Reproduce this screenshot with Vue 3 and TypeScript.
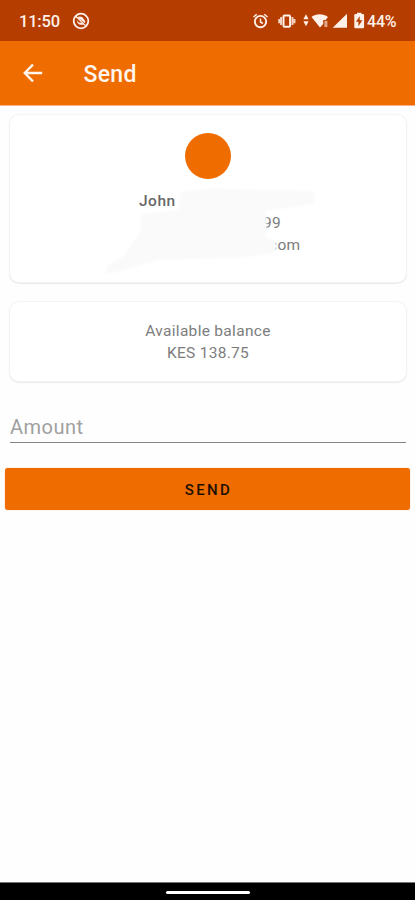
<script setup lang="ts">
import { ref } from 'vue'

const time = '11:50'
const battery = '44%'
const contact = { name: 'John', phone: '99', email: 'com' }
const balance = 'KES 138.75'
const amount = ref('')
</script>

<template>
  <div class="screen">
    <header class="status">
      <span class="time">{{ time }}</span>
      <svg class="dnd" viewBox="0 0 18 18">
        <circle cx="9" cy="9" r="7.3" fill="none" stroke="currentColor" stroke-width="1.8" />
        <path d="M5.4 5.2C7 4.2 9 4.3 10.4 5.3l2.8 3.6v2.4ZM4.7 8.2l2.2 2.3 3.1.2 2.1 2.1H8.3Q5.3 12 4.7 8.2Z" fill="currentColor" />
        <path d="m3.8 4.2 10 9.7" stroke="currentColor" stroke-width="1.3" />
      </svg>
      <svg class="tray" viewBox="0 0 115 20">
        <g fill="none" stroke="currentColor">
          <circle cx="8.5" cy="10.6" r="5.7" stroke-width="1.9" />
          <path d="M8.5 7.5v3.5l2.4 1.5M1.5 6l3.3-2.8M15.5 6l-3.3-2.8" stroke-width="1.5" />
          <rect x="31.5" y="4.4" width="6.6" height="11.4" rx="1" stroke-width="2" />
          <path d="M29.1 6.1v8M40.5 6.1v8M27.2 8v4.2M42.5 8v4.2" stroke-width="1.9" opacity=".85" />
        </g>
        <g fill="currentColor">
          <path d="m54 3.3 2.6 4.9h-5.2ZM54 15.2l-2.6-4.9h5.2Z" />
          <path d="M59.5 6c4.5-3.8 12-3.8 16.5 0l-2.4 3h-2.4v4.1L68 16.6Z" />
          <path d="M72.4 9.8h3V16h-3Z" opacity=".6" />
          <path d="M80.7 16.8 95 2.8v14Z" />
          <path fill-rule="evenodd" d="M103.2 3.1h1.8V1.8h4.4v1.3h1.8q.9 0 .9.9v12.3q0 .9-.9.9h-8q-.9 0-.9-.9V4q0-.9.9-.9Zm4.5 2.1-3.7 5.6h2.4v4.5l4-6.1h-2.7Z" />
        </g>
      </svg>
      <span class="battery">{{ battery }}</span>
    </header>

    <nav class="appbar">
      <button class="back" aria-label="Back">
        <svg viewBox="0 0 22 22"><path d="M20.2 11H2.6M11 2.6 2.7 11l8.3 8.4" fill="none" stroke="currentColor" stroke-width="2.3" /></svg>
      </button>
      <h1>Send</h1>
    </nav>

    <main>
      <section class="card contact">
        <div class="avatar"></div>
        <div class="name">{{ contact.name }}</div>
        <div class="phone">{{ contact.phone }}</div>
        <div class="email">{{ contact.email }}</div>
        <svg class="redaction" viewBox="0 0 398 168">
          <path d="M171 79q20-6 58-4l70 2q7 0 7 7 0 6-8 7l-41 6 1 13-1 14 9 2q4 8-1 13-16 3-44 5l-71 2-43 12q-12 4-10-3 3-7 18-13l16-24 2-18 37-4Z" />
        </svg>
      </section>

      <section class="card balance">
        <div>Available balance</div>
        <div>{{ balance }}</div>
      </section>

      <input v-model="amount" class="amount" placeholder="Amount" />
      <button class="send">SEND</button>
    </main>

    <footer><span class="handle"></span></footer>
  </div>
</template>

<style>
body { background: #fefefe; }
</style>

<style scoped>
.screen {
  display: flex;
  flex-direction: column;
  height: 900px;
  box-sizing: border-box;
  overflow: hidden;
  font-family: Roboto, "Liberation Sans", sans-serif;
  color: #7d7d7d;
  background: #fefefe;
}
.screen * { box-sizing: border-box; }
svg { display: block; }
.status {
  flex: none;
  height: 41px;
  display: flex;
  align-items: center;
  padding: 1px 18px 0 19px;
  background: #b53d00;
  color: #fff0e9;
}
.time { width: 53px; font-size: 16.5px; font-weight: 500; letter-spacing: -.2px; }
.dnd { width: 18px; height: 18px; }
.tray { width: 115px; height: 20px; margin-left: auto; }
.battery { width: 30px; font-size: 16px; font-weight: 500; letter-spacing: -.2px; white-space: nowrap; }
.appbar {
  flex: none;
  height: 65px;
  display: flex;
  align-items: center;
  padding: 2px 22px 0;
  background: #ef6c00;
  border-bottom: 1px solid #ffac8a;
  color: #fff5ed;
}
button { border: 0; padding: 0; background: none; color: inherit; font-family: inherit; }
.back { width: 61.5px; }
.back svg { width: 22px; height: 22px; margin-top: -2px; }
h1 { margin: 0; font-size: 23px; line-height: 28px; font-weight: 500; letter-spacing: .3px; padding-top: 1px; }
main { flex: 1; display: flex; flex-direction: column; padding: 9px 5px 0; }
.card {
  margin: 0 4px 0 5px;
  border-radius: 9px;
  background: #fff;
  box-shadow: 0 0 1px 1px #f4f4f4, 0 1px 1px 1px #e9e9e9;
  font-size: 15.5px;
  line-height: 22px;
}
.contact { position: relative; height: 167px; padding-top: 18px; }
.avatar { width: 46px; height: 46px; margin: 0 auto 11px; border-radius: 50%; background: #ef6c00; }
.name { padding-left: 129px; color: #686868; font-weight: 500; font-size: 15.5px; letter-spacing: .5px; }
.phone { padding-left: 253px; letter-spacing: .2px; }
.email { padding-left: 259px; letter-spacing: .3px; }
.redaction { position: absolute; top: -1px; left: -1px; width: 398px; height: 168px; fill: #fafafa; filter: blur(1px); }
.balance { height: 79px; margin-top: 20px; padding-top: 18px; text-align: center; letter-spacing: .3px; }
.amount {
  margin: 28px 4px 0 5px;
  height: 34px;
  padding: 2px 0 0;
  border: 0;
  border-bottom: 1px solid #858585;
  border-radius: 0;
  outline: 0;
  background: transparent;
  color: #333;
  font: 20px Roboto, "Liberation Sans", sans-serif;
  letter-spacing: .5px;
}
.amount::placeholder { color: #a0a0a0; opacity: 1; }
.send {
  height: 42px;
  margin-top: 25px;
  padding: 2px 0 0 2px;
  border-radius: 3px;
  background: #ef6c00;
  box-shadow: 0 0 1px #f28145;
  color: #201000;
  font-size: 15px;
  font-weight: 500;
  letter-spacing: 2.4px;
}
footer { flex: none; height: 18px; display: flex; justify-content: center; padding-top: 8px; background: #000; border-top: 1px solid #777; }
.handle { width: 84px; height: 3px; border-radius: 2px; background: #fff; }
</style>
